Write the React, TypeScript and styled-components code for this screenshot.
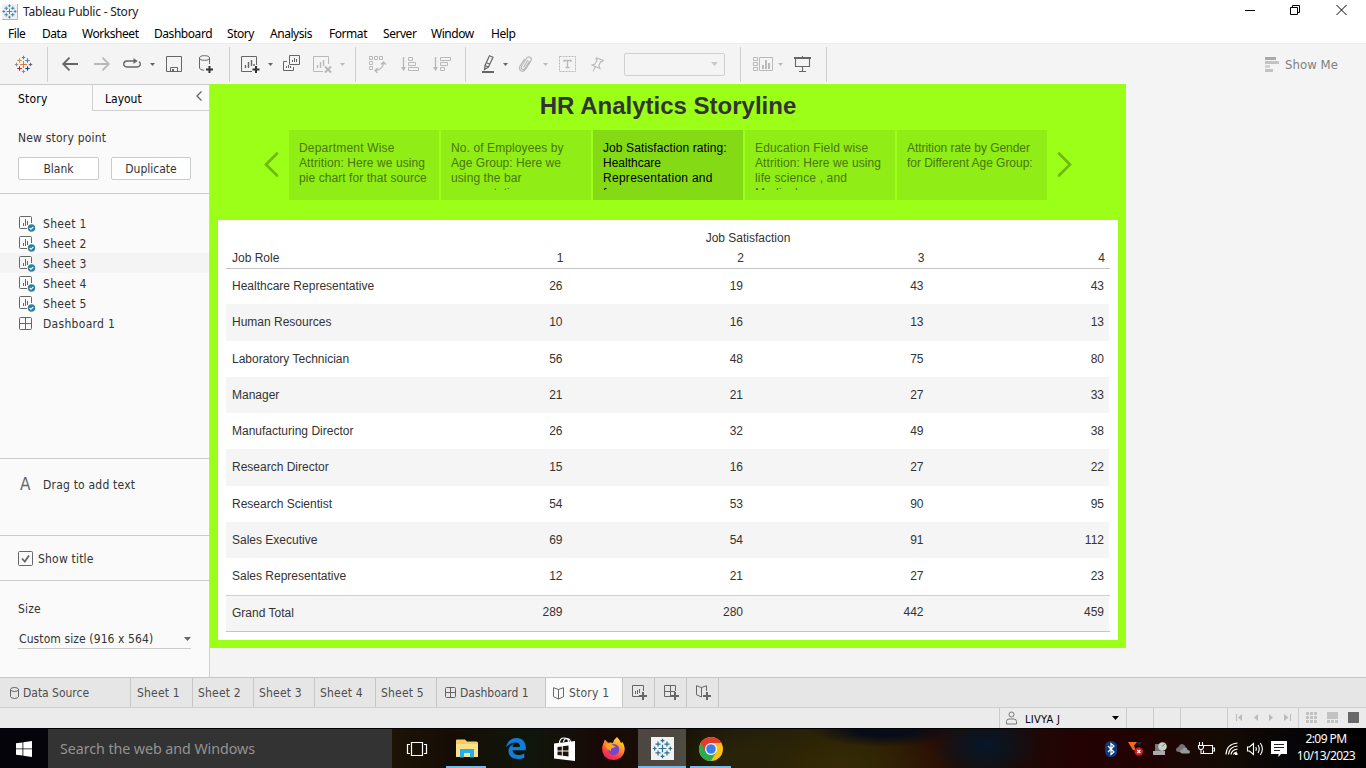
import React from 'react';
import styled, { createGlobalStyle } from 'styled-components';

const GREEN = '#9bff17';
const LINE = '#cbcbcb';

const Global = createGlobalStyle`
  * { box-sizing: border-box; }
  html, body { margin: 0; padding: 0; overflow: hidden; }
  svg { display: block; flex: none; overflow: visible; }
`;

const uiFont = '"DejaVu Sans Condensed", "Noto Sans", sans-serif';
const sysFont = '"Noto Sans", "Open Sans", sans-serif';
const dataFont = '"Liberation Sans", Arial, sans-serif';

const Screen = styled.div`
  width: 1366px;
  height: 768px;
  display: flex;
  flex-direction: column;
  background: #f4f4f4;
  font: 12px ${uiFont};
  letter-spacing: 0.2px;
  color: #333;
  white-space: nowrap;
`;

/* Title bar and menu */
const TitleBar = styled.header`
  height: 23px;
  flex: none;
  display: flex;
  align-items: center;
  background: #fff;
  padding-left: 2px;
  font-family: ${sysFont};
  letter-spacing: -0.23px;
  color: #222;
`;
const Title = styled.span`
  margin-left: 6px;
  flex: 1;
`;
const WindowControls = styled.div`
  display: flex;
  align-items: center;
  gap: 35px;
  padding-right: 19px;
  margin-top: -3px;
`;
const MenuBar = styled.nav`
  height: 20px;
  flex: none;
  display: flex;
  background: #fff;
  padding-left: 8px;
  font-family: ${sysFont};
  font-size: 12px;
  letter-spacing: -0.45px;
  line-height: 21px;
  color: #000;
`;
const MenuItem = styled.span<{ $w: number }>`
  width: ${p => p.$w}px;
`;

/* Toolbar */
const Toolbar = styled.div`
  height: 41px;
  flex: none;
  display: flex;
  align-items: center;
  background: #f4f4f4;
  border-top: 1px solid #ececec;
`;
const ToolGroup = styled.div<{ $w: number }>`
  width: ${p => p.$w}px;
  height: 35px;
  display: flex;
  align-items: center;
  border-right: 1px solid #d0d0d0;
`;
const Tool = styled.span<{ $ml: number; $w: number; $off?: boolean }>`
  margin-left: ${p => p.$ml}px;
  width: ${p => p.$w}px;
  flex: none;
  color: ${p => (p.$off ? '#b9b9b9' : '#666')};
`;
const FitSelect = styled.span`
  margin-left: 20px;
  width: 101px;
  height: 23px;
  display: flex;
  align-items: center;
  justify-content: flex-end;
  padding-right: 6px;
  border: 1px solid #d0d0d0;
  border-radius: 2px;
  color: #c8c8c8;
`;
const ShowMe = styled.div`
  margin-left: auto;
  margin-right: 28px;
  display: flex;
  align-items: center;
  gap: 6px;
  font-size: 13px;
  letter-spacing: 0.05px;
  color: #808080;
`;

/* Workspace */
const Workspace = styled.main`
  height: 593px;
  flex: none;
  display: flex;
`;
const Sidebar = styled.aside`
  width: 210px;
  flex: none;
  display: flex;
  flex-direction: column;
  background: #fafafa;
  border-top: 1px solid ${LINE};
  border-right: 1px solid #d0d0d0;
`;
const PaneTabs = styled.div`
  height: 26px;
  display: flex;
  line-height: 28px;
  color: #000;
`;
const ActivePane = styled.div`
  width: 92px;
  padding-left: 18px;
`;
const OtherPane = styled.div`
  flex: 1;
  display: flex;
  justify-content: space-between;
  padding: 0 7px 0 12px;
  border-left: 1px solid #d0d0d0;
  border-bottom: 1px solid #d0d0d0;
  letter-spacing: 0;
  svg { margin-top: 6px; }
`;
const NewPoint = styled.section`
  height: 83px;
  padding: 19px 18px 0;
  border-bottom: 1px solid ${LINE};
`;
const Heading = styled.div`
  line-height: 16px;
`;
const ButtonRow = styled.div`
  display: flex;
  gap: 12px;
  margin-top: 11px;
`;
const Button = styled.button<{ $w: number }>`
  width: ${p => p.$w}px;
  height: 23px;
  padding: 0;
  background: #fff;
  border: 1px solid ${LINE};
  border-radius: 2px;
  font: 12px ${uiFont};
  color: #333;
`;
const SheetList = styled.section`
  height: 265px;
  padding-top: 19px;
  border-bottom: 1px solid ${LINE};
`;
const SheetRow = styled.div<{ $hover?: boolean }>`
  height: 20px;
  display: flex;
  align-items: center;
  gap: 7px;
  padding: 1px 0 0 19px;
  background: ${p => (p.$hover ? '#f4f4f4' : 'transparent')};
  letter-spacing: 0.3px;
`;
const RowIcon = styled.span`
  width: 17px;
  flex: none;
`;
const DragText = styled.section`
  height: 77px;
  display: flex;
  gap: 10px;
  padding: 17px 0 0 20px;
  border-bottom: 1px solid ${LINE};
  line-height: 18px;
`;
const BigA = styled.span`
  width: 13px;
  font: 17px/17px ${uiFont};
  color: #666;
`;
const ShowTitle = styled.section`
  height: 45px;
  display: flex;
  align-items: center;
  gap: 5px;
  padding-left: 18px;
  border-bottom: 1px solid ${LINE};
`;
const CheckLabel = styled.span`
  padding-top: 2px;
`;
const SizeSection = styled.section`
  padding: 20px 18px 0;
`;
const SizeSelect = styled.div`
  width: 173px;
  height: 22px;
  margin-top: 10px;
  display: flex;
  align-items: center;
  justify-content: space-between;
  padding: 2px 0 0 1px;
  border-bottom: 1px solid ${LINE};
  letter-spacing: 0.1px;
  color: #333;
  svg { color: #666; }
`;

/* Story canvas */
const Story = styled.section`
  width: 916px;
  height: 564px;
  background: ${GREEN};
  padding: 0 8px;
  font-family: ${dataFont};
  letter-spacing: 0;
`;
const StoryTitle = styled.h1`
  margin: 0;
  height: 46px;
  font-size: 24px;
  line-height: 44px;
  letter-spacing: 0;
  text-align: center;
  color: #333;
`;
const Navigator = styled.div`
  height: 90px;
  display: flex;
  padding-left: 46px;
`;
const Arrow = styled.div<{ $ml: number }>`
  width: 14px;
  margin-left: ${p => p.$ml}px;
  margin-top: 22px;
  color: #70b911;
`;
const Cards = styled.div`
  display: flex;
  gap: 2px;
  margin-left: 11px;
`;
const Card = styled.div<{ $active?: boolean }>`
  width: 150px;
  height: 70px;
  padding: 11px 0 10px 10px;
  background: ${p => (p.$active ? '#84da14' : '#90ed16')};
  color: ${p => (p.$active ? '#000' : '#48770b')};
`;
const CardText = styled.div`
  height: 49px;
  overflow: hidden;
`;
const CardLine = styled.div<{ $ls: number }>`
  line-height: 15px;
  letter-spacing: ${p => p.$ls}px;
`;
const Sheet = styled.div`
  width: 900px;
  height: 420px;
  padding: 10px 8px 0;
  background: #fff;
`;
const FieldLabel = styled.div`
  height: 17px;
  line-height: 17px;
  padding-left: 160px;
  text-align: center;
`;
const Row = styled.div<{ $shade?: boolean }>`
  display: grid;
  grid-template-columns: 163px repeat(4, 180.5px);
  width: 883px;
  height: 36.27px;
  line-height: 37px;
  background: ${p => (p.$shade ? '#f5f5f5' : 'transparent')};
`;
const Num = styled.span`
  text-align: right;
  padding-right: 7px;
  line-height: 36px;
`;
const HeadRow = styled(Row)`
  width: 884px;
  height: 22px;
  line-height: 22px;
  margin-bottom: -1px;
  border-bottom: 1px solid #c4c4c4;
  ${Num} { line-height: 22px; padding-right: 6px; }
`;
const TotalRow = styled(Row)`
  width: 884px;
  height: 37px;
  margin-top: 1px;
  line-height: 35px;
  background: linear-gradient(#f5f5f5, #f5f5f5) left / 883px 100% no-repeat;
  border-top: 1px solid #d0d0d0;
  border-bottom: 1px solid #c4c4c4;
  ${Num} { line-height: 33px; }
`;
const Role = styled.span`
  padding-left: 6px;
`;

/* Sheet tabs and status bar */
const TabBar = styled.div`
  height: 31px;
  flex: none;
  display: flex;
  background: #e6e6e6;
  border-top: 1px solid #c6c6c6;
  border-bottom: 1px solid #cfcfcf;
  color: #4e4e4e;
`;
const Tab = styled.div<{ $w: number; $pl: number; $active?: boolean; $tight?: boolean }>`
  width: ${p => p.$w}px;
  display: flex;
  align-items: center;
  gap: ${p => (p.$tight ? 4 : 5)}px;
  padding-left: ${p => p.$pl}px;
  border-right: 1px solid #c6c6c6;
  background: ${p => (p.$active ? '#fafafa' : 'transparent')};
  letter-spacing: ${p => (p.$tight ? -0.02 : 0.2)}px;
`;
const StatusBar = styled.div`
  height: 20px;
  flex: none;
  display: flex;
  justify-content: flex-end;
  background: #ebebeb;
`;
const StatusCell = styled.div<{ $w: number; $gap?: number }>`
  width: ${p => p.$w}px;
  height: 20px;
  display: flex;
  align-items: center;
  justify-content: center;
  gap: ${p => p.$gap || 0}px;
  border-left: 1px solid ${LINE};
`;
const NavCell = styled(StatusCell)`
  padding-bottom: 1px;
`;
const UserCell = styled(StatusCell)`
  justify-content: flex-start;
  padding: 0 7px 0 6px;
  color: #000;
`;
const UserName = styled.span`
  flex: 1;
  font-size: 11px;
  letter-spacing: 0.3px;
  margin: 2px 0 0 8px;
`;

/* Task bar */
const TaskBar = styled.footer`
  height: 40px;
  flex: none;
  display: flex;
  border-top: 1px solid #000;
  background:
    radial-gradient(ellipse 75px 18px at 885px 0px, #080c18 40%, transparent),
    radial-gradient(ellipse 55px 34px at 985px 16px, #06162a, transparent),
    radial-gradient(ellipse 60px 40px at 735px 30px, #2a2509, transparent),
    radial-gradient(ellipse 120px 50px at 840px 35px, #352a04, transparent),
    linear-gradient(90deg, #04040a 0 48px, #1d1405 392px, #150d05 450px, #10160b 530px, #180907 600px, #161206 680px, #211d0b 760px, #281f04 860px, #2a0a04 930px, #170f08 985px, #240203 1075px, #210203 1140px, #140b03 1220px, #070507 1290px, #000 1366px);
`;
const Start = styled.div`
  width: 48px;
  display: flex;
  align-items: center;
  justify-content: center;
`;
const Search = styled.div`
  width: 344px;
  padding-left: 12px;
  background: #333;
  color: #929292;
  font: 14.3px/40px ${sysFont};
  letter-spacing: -0.08px;
`;
const TaskButton = styled.div<{ $w?: number; $open?: boolean; $active?: boolean }>`
  width: ${p => p.$w || 49}px;
  position: relative;
  display: flex;
  align-items: center;
  justify-content: center;
  background: ${p => (p.$active ? 'rgba(255,255,255,.24)' : 'none')};
  &::after {
    content: '';
    display: ${p => (p.$open ? 'block' : 'none')};
    position: absolute;
    left: ${p => (p.$active ? 0 : 4)}px;
    right: ${p => (p.$active ? 0 : 5)}px;
    bottom: 0;
    height: 2px;
    background: #76b9ed;
  }
`;
const Tray = styled.div`
  margin-left: auto;
  display: flex;
  align-items: center;
  color: #fff;
`;
const TrayItem = styled.span<{ $ml: number }>`
  margin-left: ${p => p.$ml}px;
`;
const Clock = styled.div`
  width: 66px;
  margin: -4px 7px 0 6px;
  text-align: center;
  font: 12px/17px ${sysFont};
  letter-spacing: -0.55px;
`;

const Caret = ({ w = 5, h = 3 }: { w?: number; h?: number }) => (
  <svg width={w} height={h}><path d={`M0 0H${w}L${w / 2} ${h}Z`} fill="currentColor" /></svg>
);

type Cross = [number, number, number, string];
const CROSSES: Cross[] = [
  [8.5, 8.5, 3.4, '#e8762c'], [8.5, 1.5, 1.7, '#5b879b'], [8.5, 15.5, 1.7, '#7199a6'],
  [1.5, 8.5, 1.7, '#7199a6'], [15.5, 8.5, 1.7, '#5b6591'], [4.5, 4.5, 2.3, '#e8912c'],
  [12.5, 4.5, 2.3, '#59879b'], [4.5, 12.5, 2.3, '#c72035'], [12.5, 12.5, 2.3, '#1f457e'],
];
const Crosses = ({ color }: { color?: string }) => (
  <>
    {CROSSES.map(([x, y, r, c], i) => (
      <path key={i} d={`M${x - r} ${y}H${x + r}M${x} ${y - r}V${y + r}`} stroke={color || c} strokeWidth="1.1" />
    ))}
  </>
);
const TableauMark = () => <svg width="17" height="17"><Crosses /></svg>;
const AppIcon = () => (
  <svg width="15" height="15">
    <path d="M0 0H15V15H0Z" fill="#f1f1f1" />
    <path d="M15.5 0V15.5H0" fill="none" stroke="#b5b5b5" />
    <g transform="translate(.6 .6) scale(.81)"><Crosses color="#2f7fa8" /></g>
  </svg>
);

const NewSheetIcon = () => (
  <svg width="19" height="18" fill="none" stroke="currentColor">
    <path d="M11 16.5H.5V1.5H15.5V10" />
    <path d="M4.5 10V13M7.5 7V13M10.5 5V11M13 9V11" strokeWidth="1.4" />
    <path d="M15 11V18M11.5 14.5H18.5" stroke="#333" strokeWidth="2" />
  </svg>
);
const ClearIcon = () => (
  <svg width="19" height="18" fill="none" stroke="currentColor">
    <path d="M10 16.5H.5V1.5H15.5V9" />
    <path d="M4.5 10V13M7.5 7V13M10.5 5V11" strokeWidth="1.4" />
    <path d="M12 11.5L18 17.5M18 11.5L12 17.5" strokeWidth="2" />
  </svg>
);
const DuplicateIcon = () => (
  <svg width="17" height="18" fill="none" stroke="currentColor">
    <path d="M6.5.5H16.5V9.5H6.5ZM4 6.5H.5V15.5H10.5V12" />
    <path d="M9.500 5V7M11.500 3V7M13.500 4V7M3.500 11V13M5.500 10V13M7.500 11V13" />
  </svg>
);
const SheetIcon = () => (
  <svg width="17" height="16" fill="none" stroke="#666">
    <path d="M8 12.5H1.5Q.5 12.5.5 11.5V1.5Q.5.5 1.5.5H11.5Q12.5.5 12.5 1.5V7" />
    <path d="M4.5 7V10M6.5 3V10M8.5 5V9" />
    <circle cx="12.5" cy="12" r="3.7" fill="#2f7f9f" stroke="none" />
    <path d="M10.7 12L12 13.3L14.4 10.8" stroke="#fff" strokeWidth="1.1" />
  </svg>
);
const GridIcon = ({ s = 13 }: { s?: number }) => (
  <svg width={s} height={s} fill="none" stroke="#666">
    <rect x=".5" y=".5" width={s - 1} height={s - 1} rx="1" />
    <path d={`M${Math.floor(s / 2) + 0.5} 0V${s}M0 ${Math.floor(s / 2) + 0.5}H${s}`} />
  </svg>
);

const ROWS: [string, number[]][] = [
  ['Healthcare Representative', [26, 19, 43, 43]],
  ['Human Resources', [10, 16, 13, 13]],
  ['Laboratory Technician', [56, 48, 75, 80]],
  ['Manager', [21, 21, 27, 33]],
  ['Manufacturing Director', [26, 32, 49, 38]],
  ['Research Director', [15, 16, 27, 22]],
  ['Research Scientist', [54, 53, 90, 95]],
  ['Sales Executive', [69, 54, 91, 112]],
  ['Sales Representative', [12, 21, 27, 23]],
];
const POINTS: [string, number][][] = [
  [['Department Wise', 0.2], ['Attrition: Here we using', 0.08], ['pie chart for that source', 0.07]],
  [['No. of Employees by', 0.1], ['Age Group: Here we', 0.03], ['using the bar', 0.1], ['segmentation', 0]],
  [['Job Satisfaction rating:', 0.1], ['Healthcare', 0], ['Representation and', 0.28], ['from', 0]],
  [['Education Field wise', 0.16], ['Attrition: Here we using', 0.08], ['life science , and', 0.15], ['Medical', 0.2]],
  [['Attrition rate by Gender', -0.05], ['for Different Age Group:', -0.04]],
];
const MENUS: [string, number][] = [['File', 34], ['Data', 40], ['Worksheet', 72], ['Dashboard', 73], ['Story', 43], ['Analysis', 59], ['Format', 54], ['Server', 48], ['Window', 60], ['Help', 40]];

export default function App() {
  return (
    <Screen>
      <Global />
      <TitleBar>
        <AppIcon />
        <Title>Tableau Public - Story</Title>
        <WindowControls>
          <svg width="10" height="10"><path d="M0 5.5H10" stroke="#000" /></svg>
          <svg width="11" height="10" fill="none" stroke="#000"><path d="M.5 2.5H7.500V9.5H.5ZM2.5 2V.5H9.5V7.5H8" /></svg>
          <svg width="11" height="10" stroke="#000"><path d="M.5 0L10.5 10M10.5 0L.5 10" /></svg>
        </WindowControls>
      </TitleBar>
      <MenuBar>{MENUS.map(([m, w]) => <MenuItem key={m} $w={w}>{m}</MenuItem>)}</MenuBar>

      <Toolbar>
        <ToolGroup $w={48}><Tool $ml={15} $w={17}><TableauMark /></Tool></ToolGroup>
        <ToolGroup $w={182}>
          <Tool $ml={14} $w={16}><svg width="16" height="14" fill="none" stroke="currentColor" strokeWidth="1.8"><path d="M16 7H1M7.5.7L1.2 7L7.5 13.3" /></svg></Tool>
          <Tool $ml={16} $w={16} $off><svg width="16" height="14" fill="none" stroke="currentColor" strokeWidth="1.8"><path d="M0 7H15M8.5.7L14.8 7L8.5 13.3" /></svg></Tool>
          <Tool $ml={13} $w={18}><svg width="18" height="12" fill="none" stroke="currentColor" strokeWidth="1.3"><path d="M13.5 3H4Q.7 3.2.7 6Q.7 8.8 4 9H14Q17.3 8.8 17.3 6Q17.3 4.5 16 3.6" /><path d="M10.5 0L14.5 3L10.5 6Z" fill="currentColor" stroke="none" /></svg></Tool>
          <Tool $ml={9} $w={5}><Caret /></Tool>
          <Tool $ml={11} $w={16}><svg width="16" height="16" fill="none" stroke="currentColor"><path d="M.5.5H15.5V15.5H.5ZM4.5 15V11.5H11.5V15" /><path d="M6 13H8V15.5H6Z" fill="currentColor" stroke="none" /></svg></Tool>
          <Tool $ml={17} $w={15}><svg width="15" height="18" fill="none" stroke="currentColor"><ellipse cx="5.5" cy="3" rx="5" ry="2.3" /><path d="M.5 3V13Q.8 15 5 15.3M10.5 3V9" /><path d="M10.500 11V18M7 14.500H14" stroke="#333" strokeWidth="2" /></svg></Tool>
        </ToolGroup>
        <ToolGroup $w={126}>
          <Tool $ml={11} $w={19}><NewSheetIcon /></Tool>
          <Tool $ml={8} $w={5}><Caret /></Tool>
          <Tool $ml={10} $w={17}><DuplicateIcon /></Tool>
          <Tool $ml={13} $w={19} $off><ClearIcon /></Tool>
          <Tool $ml={8} $w={5} $off><Caret /></Tool>
        </ToolGroup>
        <ToolGroup $w={110}>
          <Tool $ml={13} $w={17} $off><svg width="17" height="16" fill="none" stroke="currentColor"><path d="M.5.5H3.5V3.5H.5ZM5.5.5H8.5V3.5H5.5ZM10.5.5H13.5V3.5H10.5ZM.5 5.5H3.5V8.5H.5ZM.5 10.5H3.5V13.5H.5Z" /><path d="M14.500 7Q14 13 7 14.500M12 8.500L14.500 6L17 8.500M8.500 12L6 14.500L8.500 17" strokeWidth="1.3" /></svg></Tool>
          <Tool $ml={15} $w={18} $off><svg width="18" height="15" fill="none" stroke="currentColor"><path d="M2.5 0V13" strokeWidth="1.4" /><path d="M0 10H5L2.5 14Z" fill="currentColor" stroke="none" /><path d="M7.5.5H11.5V3.5H7.5ZM7.5 5.5H14.5V8.5H7.5ZM7.5 10.5H17.5V13.5H7.5Z" /></svg></Tool>
          <Tool $ml={14} $w={18} $off><svg width="18" height="15" fill="none" stroke="currentColor"><path d="M2.5 0V13" strokeWidth="1.4" /><path d="M0 10H5L2.5 14Z" fill="currentColor" stroke="none" /><path d="M7.5.5H17.5V3.5H7.5ZM7.5 5.5H14.5V8.5H7.5ZM7.5 10.5H11.5V13.5H7.5Z" /></svg></Tool>
        </ToolGroup>
        <ToolGroup $w={275}>
          <Tool $ml={16} $w={12}><svg width="12" height="18" fill="none" stroke="currentColor" strokeWidth="1.2"><path d="M7.5.8L11 2.3L6.5 12L3 10.5ZM3 10.5L2.5 14.5L6.5 12M5 8L7.5 9" /><path d="M0 17H12" strokeWidth="2" /></svg></Tool>
          <Tool $ml={9} $w={5}><Caret /></Tool>
          <Tool $ml={11} $w={13} $off><svg width="13" height="16" fill="none" stroke="currentColor" strokeWidth="1.2"><path d="M10.5 5L6 12.5Q4.5 14.3 3 13.3Q1.5 12.2 2.5 10.5L7.5 2.3Q9 .2 11 1.3Q13 2.6 12 4.6L6.8 13Q4.5 16.3 2 14.8Q-.6 13 1 10L5.5 3M4.5 11.5L9 4" /></svg></Tool>
          <Tool $ml={11} $w={5} $off><Caret /></Tool>
          <Tool $ml={11} $w={17} $off><svg width="17" height="16" fill="none" stroke="currentColor"><rect x=".5" y=".5" width="16" height="15" strokeDasharray="2 1" /><path d="M5 6V4.500H12V6M8.500 4.500V12M6.500 11.500H10.500" strokeWidth="1.3" /></svg></Tool>
          <Tool $ml={15} $w={13} $off><svg width="13" height="15" fill="none" stroke="currentColor" strokeWidth="1.1"><path d="M5.5.8L12.3 3.5L11 4.8L9.8 4.5L7.8 8.5L9 11.5L1 8L4 7L6.2 3L5 2ZM4.5 9.8L2 14.3" /></svg></Tool>
          <FitSelect><Caret w={7} h={4} /></FitSelect>
        </ToolGroup>
        <ToolGroup $w={86}>
          <Tool $ml={12} $w={20} $off><svg width="20" height="14" fill="none" stroke="currentColor"><path d="M.5.5H4.5V3.5H.5ZM.5 5.5H4.5V8.5H.5ZM.5 10.5H4.5V13.5H.5ZM6.5.5H19.5V13.5H6.5Z" /><path d="M10 8V12M13 3V12M16 6V12" strokeWidth="2" /></svg></Tool>
          <Tool $ml={5} $w={5} $off><Caret /></Tool>
          <Tool $ml={11} $w={17}><svg width="17" height="16" fill="none" stroke="currentColor"><path d="M0 2H17" strokeWidth="2" /><path d="M1.500 2V10.500H15.500V2M8.500 10V15M5 15.500H12M8.500 0V1" strokeWidth="1.1" /></svg></Tool>
        </ToolGroup>
        <ShowMe>
          <svg width="14" height="15"><path d="M0 0H11V3H0Z" fill="#aaa" /><path d="M0 4H14V7H0ZM0 12H8V15H0Z" fill="#c3c3c3" /><path d="M0 8H5V11H0Z" fill="#d3d3d3" /></svg>
          Show Me
        </ShowMe>
      </Toolbar>

      <Workspace>
        <Sidebar>
          <PaneTabs>
            <ActivePane>Story</ActivePane>
            <OtherPane>Layout<svg width="6" height="10" fill="none" stroke="#666" strokeWidth="1.3"><path d="M5.5.5L1 5L5.5 9.5" /></svg></OtherPane>
          </PaneTabs>
          <NewPoint>
            <Heading>New story point</Heading>
            <ButtonRow><Button $w={81}>Blank</Button><Button $w={80}>Duplicate</Button></ButtonRow>
          </NewPoint>
          <SheetList>
            {[1, 2, 3, 4, 5].map(n => <SheetRow key={n} $hover={n === 3}><RowIcon><SheetIcon /></RowIcon>Sheet {n}</SheetRow>)}
            <SheetRow><RowIcon><GridIcon /></RowIcon>Dashboard 1</SheetRow>
          </SheetList>
          <DragText><BigA>A</BigA>Drag to add text</DragText>
          <ShowTitle>
            <svg width="15" height="15" fill="none" stroke="#666"><rect x=".5" y=".5" width="14" height="14" rx="1" /><path d="M4 7.5L6.8 10.5L11 4.5" strokeWidth="1.8" /></svg>
            <CheckLabel>Show title</CheckLabel>
          </ShowTitle>
          <SizeSection>
            <Heading>Size</Heading>
            <SizeSelect>Custom size (916 x 564)<Caret w={7} h={4} /></SizeSelect>
          </SizeSection>
        </Sidebar>

        <Story>
          <StoryTitle>HR Analytics Storyline</StoryTitle>
          <Navigator>
            <Arrow $ml={0}><svg width="14" height="24" fill="none" stroke="currentColor" strokeWidth="2.6" strokeLinecap="round"><path d="M13 1.5L2 12.500L13 23.500" /></svg></Arrow>
            <Cards>
              {POINTS.map((lines, i) => (
                <Card key={i} $active={i === 2}>
                  <CardText>{lines.map(([t, ls]) => <CardLine key={t} $ls={ls}>{t}</CardLine>)}</CardText>
                </Card>
              ))}
            </Cards>
            <Arrow $ml={11}><svg width="14" height="24" fill="none" stroke="currentColor" strokeWidth="2.6" strokeLinecap="round"><path d="M1 1.5L12 12.500L1 23.500" /></svg></Arrow>
          </Navigator>
          <Sheet>
            <FieldLabel>Job Satisfaction</FieldLabel>
            <HeadRow><Role>Job Role</Role>{[1, 2, 3, 4].map(n => <Num key={n}>{n}</Num>)}</HeadRow>
            {ROWS.map(([role, nums], i) => (
              <Row key={role} $shade={i % 2 === 1}><Role>{role}</Role>{nums.map((n, j) => <Num key={j}>{n}</Num>)}</Row>
            ))}
            <TotalRow><Role>Grand Total</Role>{[289, 280, 442, 459].map(n => <Num key={n}>{n}</Num>)}</TotalRow>
          </Sheet>
        </Story>
      </Workspace>

      <TabBar>
        <Tab $w={131} $pl={10} $tight>
          <svg width="9" height="12" fill="none" stroke="#666"><ellipse cx="4.5" cy="2.5" rx="4" ry="2" /><path d="M.5 2.5V9.5Q.8 11.3 4.5 11.5Q8.2 11.3 8.5 9.5V2.5" /></svg>
          Data Source
        </Tab>
        <Tab $w={62} $pl={6}>Sheet 1</Tab>
        <Tab $w={61} $pl={5}>Sheet 2</Tab>
        <Tab $w={61} $pl={5}>Sheet 3</Tab>
        <Tab $w={61} $pl={5}>Sheet 4</Tab>
        <Tab $w={61} $pl={5}>Sheet 5</Tab>
        <Tab $w={109} $pl={8} $tight><GridIcon s={11} />Dashboard 1</Tab>
        <Tab $w={77} $pl={7} $active><svg width="11" height="12" fill="none" stroke="#666"><path d="M5.5 2.5L.5.7V9.7L5.5 12L10.5 9.7V.7L5.5 2.5V12" /></svg>Story 1</Tab>
        <Tab $w={32} $pl={9}><svg width="15" height="15" fill="none" stroke="#666"><path d="M9 11.5H.5V.5H11.5V6M3.5 6V9M5.5 5V9M7.5 4V8" /><path d="M11 7V15M7 11H15" strokeWidth="2" /></svg></Tab>
        <Tab $w={32} $pl={9}><svg width="15" height="15" fill="none" stroke="#666"><path d="M7 11.5H.5V.5H11.5V6M6.5 0V11M0 6.5H11" /><path d="M11 7V15M7 11H15" strokeWidth="2" /></svg></Tab>
        <Tab $w={32} $pl={9}><svg width="15" height="15" fill="none" stroke="#666"><path d="M5.5 2.5L.5.7V9.7L5.5 12V2.5L10.5.7V6" /><path d="M11 7V15M7 11H15" strokeWidth="2" /></svg></Tab>
      </TabBar>
      <StatusBar>
        <UserCell $w={127}>
          <svg width="11" height="13" fill="none" stroke="#777"><circle cx="5.5" cy="2.500" r="2.5" /><path d="M.5 12V9.500Q.6 7 3 7H8Q10.4 7 10.5 9.500V12Z" /></svg>
          <UserName>LIVYA J</UserName>
          <Caret w={7} h={4} />
        </UserCell>
        <StatusCell $w={27} /><StatusCell $w={27} /><StatusCell $w={47} />
        <NavCell $w={71} $gap={11}>
          <svg width="7" height="7" fill="#bbb"><path d="M0 0H1V7H0ZM6 0V7L2 3.5Z" /></svg>
          <svg width="4" height="7" fill="#bbb"><path d="M4 0V7L0 3.5Z" /></svg>
          <svg width="4" height="7" fill="#bbb"><path d="M0 0V7L4 3.5Z" /></svg>
          <svg width="7" height="7" fill="#bbb"><path d="M6 0H7V7H6ZM0 0V7L4.5 3.5Z" /></svg>
        </NavCell>
        <NavCell $w={68} $gap={10}>
          <svg width="11" height="11" fill="#c2c2c2"><path d="M0 0H3V3H0ZM4 0H7V3H4ZM8 0H11V3H8ZM0 4H3V7H0ZM4 4H7V7H4ZM8 4H11V7H8ZM0 8H3V11H0ZM4 8H7V11H4ZM8 8H11V11H8Z" /></svg>
          <svg width="11" height="11" fill="#c2c2c2"><path d="M0 0H11V7H0ZM0 8H3V11H0ZM4 8H7V11H4ZM8 8H11V11H8Z" /></svg>
          <svg width="11" height="11" fill="#686868"><path d="M0 0H11V11H0Z" /></svg>
        </NavCell>
      </StatusBar>

      <TaskBar>
        <Start><svg width="16" height="16" fill="#fff"><path d="M0 2.3L6.5 1.4V7.5H0ZM7.3 1.3L16 0V7.5H7.3ZM0 8.3H6.5V14.6L0 13.7ZM7.3 8.3H16V16L7.3 14.7Z" /></svg></Start>
        <Search>Search the web and Windows</Search>
        <TaskButton $w={50}><svg width="20" height="14" fill="none" stroke="#fff"><path d="M4.5.5H15.5V13.5H4.5ZM3 2.5H.5V11.5H3M17 2.5H19.5V11.5H17" strokeWidth="1.2" /></svg></TaskButton>
        <TaskButton $open>
          <svg width="22" height="19"><path d="M0 1.5Q0 .5 1 .5H9L11 2.5H20Q22 2.5 22 4V18H0Z" fill="#f3cf62" /><path d="M0 5H22V18H0Z" fill="#fbe08a" /><path d="M4 10H18V18.5H14V14H8V18.5H4Z" fill="#1fb0ee" /></svg>
        </TaskButton>
        <TaskButton>
          <svg width="20" height="21" fill="#0f7ed9"><path d="M0 9.3C1.3 3.5 5 0 10.5 0C16.5 0 19.8 4.2 19.8 9.5V12.3H6.6C6.8 15.5 9.5 17 12.8 17C15.2 17 17 16.3 18.3 15.5V19.7C16.5 20.6 14.3 21 12 21C6 21 2.5 17.8 2.5 13C2.5 9.5 4.8 7 8 5.7C7 6.7 6.7 7.7 6.6 8.9H14C14 6 12.5 4.5 9.6 4.5C5.6 4.5 2.4 6.7 0 9.3Z" /></svg>
        </TaskButton>
        <TaskButton>
          <svg width="22" height="24"><path d="M5.5 6Q5.5 1 10 1Q14.5 1 14.5 5M9.5 5Q10 1.5 13 1.5Q16 1.5 16.5 5" fill="none" stroke="#fff" strokeWidth="1.2" /><path d="M0 6.5L21 4V24L0 21.5Z" fill="#fff" /><path d="M3.5 10L7.8 9.5V13.5H3.5ZM8.8 9.3L14.5 8.5V13.5H8.8ZM3.5 14.5H7.8V18.5L3.5 18ZM8.8 14.5H14.5V19.5L8.8 18.7Z" fill="#1c1408" /></svg>
        </TaskButton>
        <TaskButton>
          <svg width="23" height="23">
            <defs><linearGradient id="fox" x1=".8" y1="0" x2=".3" y2="1"><stop offset="0" stopColor="#ffe33c" /><stop offset=".4" stopColor="#ff9a1c" /><stop offset=".75" stopColor="#ff3b47" /><stop offset="1" stopColor="#e91e63" /></linearGradient></defs>
            <path d="M15 0Q18 3 19 6L20.5 5Q24 11 22 16Q19 23 11.5 23Q3 23 .5 15Q-.5 9 2 5L2.8 2.5L6 5.8Q9 5 11 6Q12 2 15 0Z" fill="url(#fox)" />
            <circle cx="11.7" cy="12.5" r="5.6" fill="#7346d6" /><path d="M3 8Q8 5.5 11.5 8.5L13.5 9.5Q12 11 10 11Q8.5 12 9 14Q5 13 3 8Z" fill="#ffa51f" />
          </svg>
        </TaskButton>
        <TaskButton $w={48} $open $active>
          <svg width="23" height="23"><path d="M0 0H23V23H0Z" fill="#f2f2f0" /><g transform="translate(2 2) scale(1.118)"><Crosses color="#2b6f92" /></g></svg>
        </TaskButton>
        <TaskButton $w={50} $open>
          <svg width="24" height="24"><circle cx="12" cy="12" r="12" fill="#fbc116" /><path d="M1.6 6A12 12 0 0 0 12 24L17.2 15L12 12H5.500Z" fill="#2da94f" /><path d="M1.6 6A12 12 0 0 1 22.4 6H12L6.800 15Z" fill="#e33b2e" /><circle cx="12" cy="12" r="6" fill="#fff" /><circle cx="12" cy="12" r="4.8" fill="#3b7ded" /></svg>
        </TaskButton>
        <Tray>
          <TrayItem $ml={0}><svg width="12" height="16"><rect width="12" height="16" rx="5.5" fill="#0a3a7a" /><path d="M3 5L9 11L6 13.5V2.5L9 5L3 11" fill="none" stroke="#fff" strokeWidth="1.2" /></svg></TrayItem>
          <TrayItem $ml={11}><svg width="15" height="15"><path d="M0 1H9L6 4.5L7.5 9.5L5 9Z" fill="#f26a21" /><path d="M9 1H14L11 5Z" fill="#16284a" /><circle cx="10.8" cy="10.5" r="4.3" fill="#c91d1d" /><path d="M9.3 9L12.3 12M12.3 9L9.3 12" stroke="#fff" strokeWidth="1.3" /></svg></TrayItem>
          <TrayItem $ml={10}><svg width="14" height="14"><path d="M2 2H10V9H2Z" fill="#777" /><path d="M0 9H12V13H0Z" fill="#aaa" /><circle cx="9.5" cy="4.5" r="4.3" fill="#c9d0cc" /><path d="M9.5 4.5L12 1.5" stroke="#4d8b58" /></svg></TrayItem>
          <TrayItem $ml={9}><svg width="14" height="11"><path d="M3 9Q0 9 0 6.5Q0 4.5 2.5 4Q4 0 7.5 1.5Q9 2 9.5 4L4 9Z" fill="#737373" /><path d="M6.5 10.5Q4 10.5 4 8.5Q4 6.5 6.5 6.5Q7.5 3.5 10 4.5Q11.5 5 11.5 7Q14 7 14 9Q14 10.5 12 10.5Z" fill="#999" /></svg></TrayItem>
          <TrayItem $ml={8}><svg width="17" height="13" fill="none" stroke="#fff" strokeWidth="1.1"><path d="M6 3.5H14.5V11.5H5.5V8.5M15 6H16.5V9H15M1.5 0V3M4.5 0V3M.5 3.5H5.5V5Q5.5 7.5 3 7.5Q.5 7.5.5 5ZM3 8V11.5H6" /></svg></TrayItem>
          <TrayItem $ml={10}><svg width="13" height="13" fill="none" stroke="#fff" strokeWidth="1.2"><path d="M1 12.5Q1.5 2 12.5 1M3.5 12.5Q4 5 12.5 4M6 12.5Q6.5 8 12.5 7M8.5 12.5Q9 10.5 12 10" /><path d="M10 11H12.5V13H10Z" fill="#fff" stroke="none" /></svg></TrayItem>
          <TrayItem $ml={9}><svg width="17" height="14" fill="none" stroke="#fff" strokeWidth="1.1"><path d="M.5 5H2.5L6.5 1.5V12.5L2.5 9H.5ZM8.8 5Q10 7 8.8 9M11 3Q13.5 7 11 11M13.3 1Q17.5 7 13.3 13" /></svg></TrayItem>
          <TrayItem $ml={7}><svg width="16" height="16"><path d="M0 0H16V13H10L7.5 16V13H0Z" fill="#fff" /><path d="M3 3.5H13M3 6.5H13M3 9.5H9" stroke="#222" /></svg></TrayItem>
          <Clock>2:09 PM<br />10/13/2023</Clock>
        </Tray>
      </TaskBar>
    </Screen>
  );
}
